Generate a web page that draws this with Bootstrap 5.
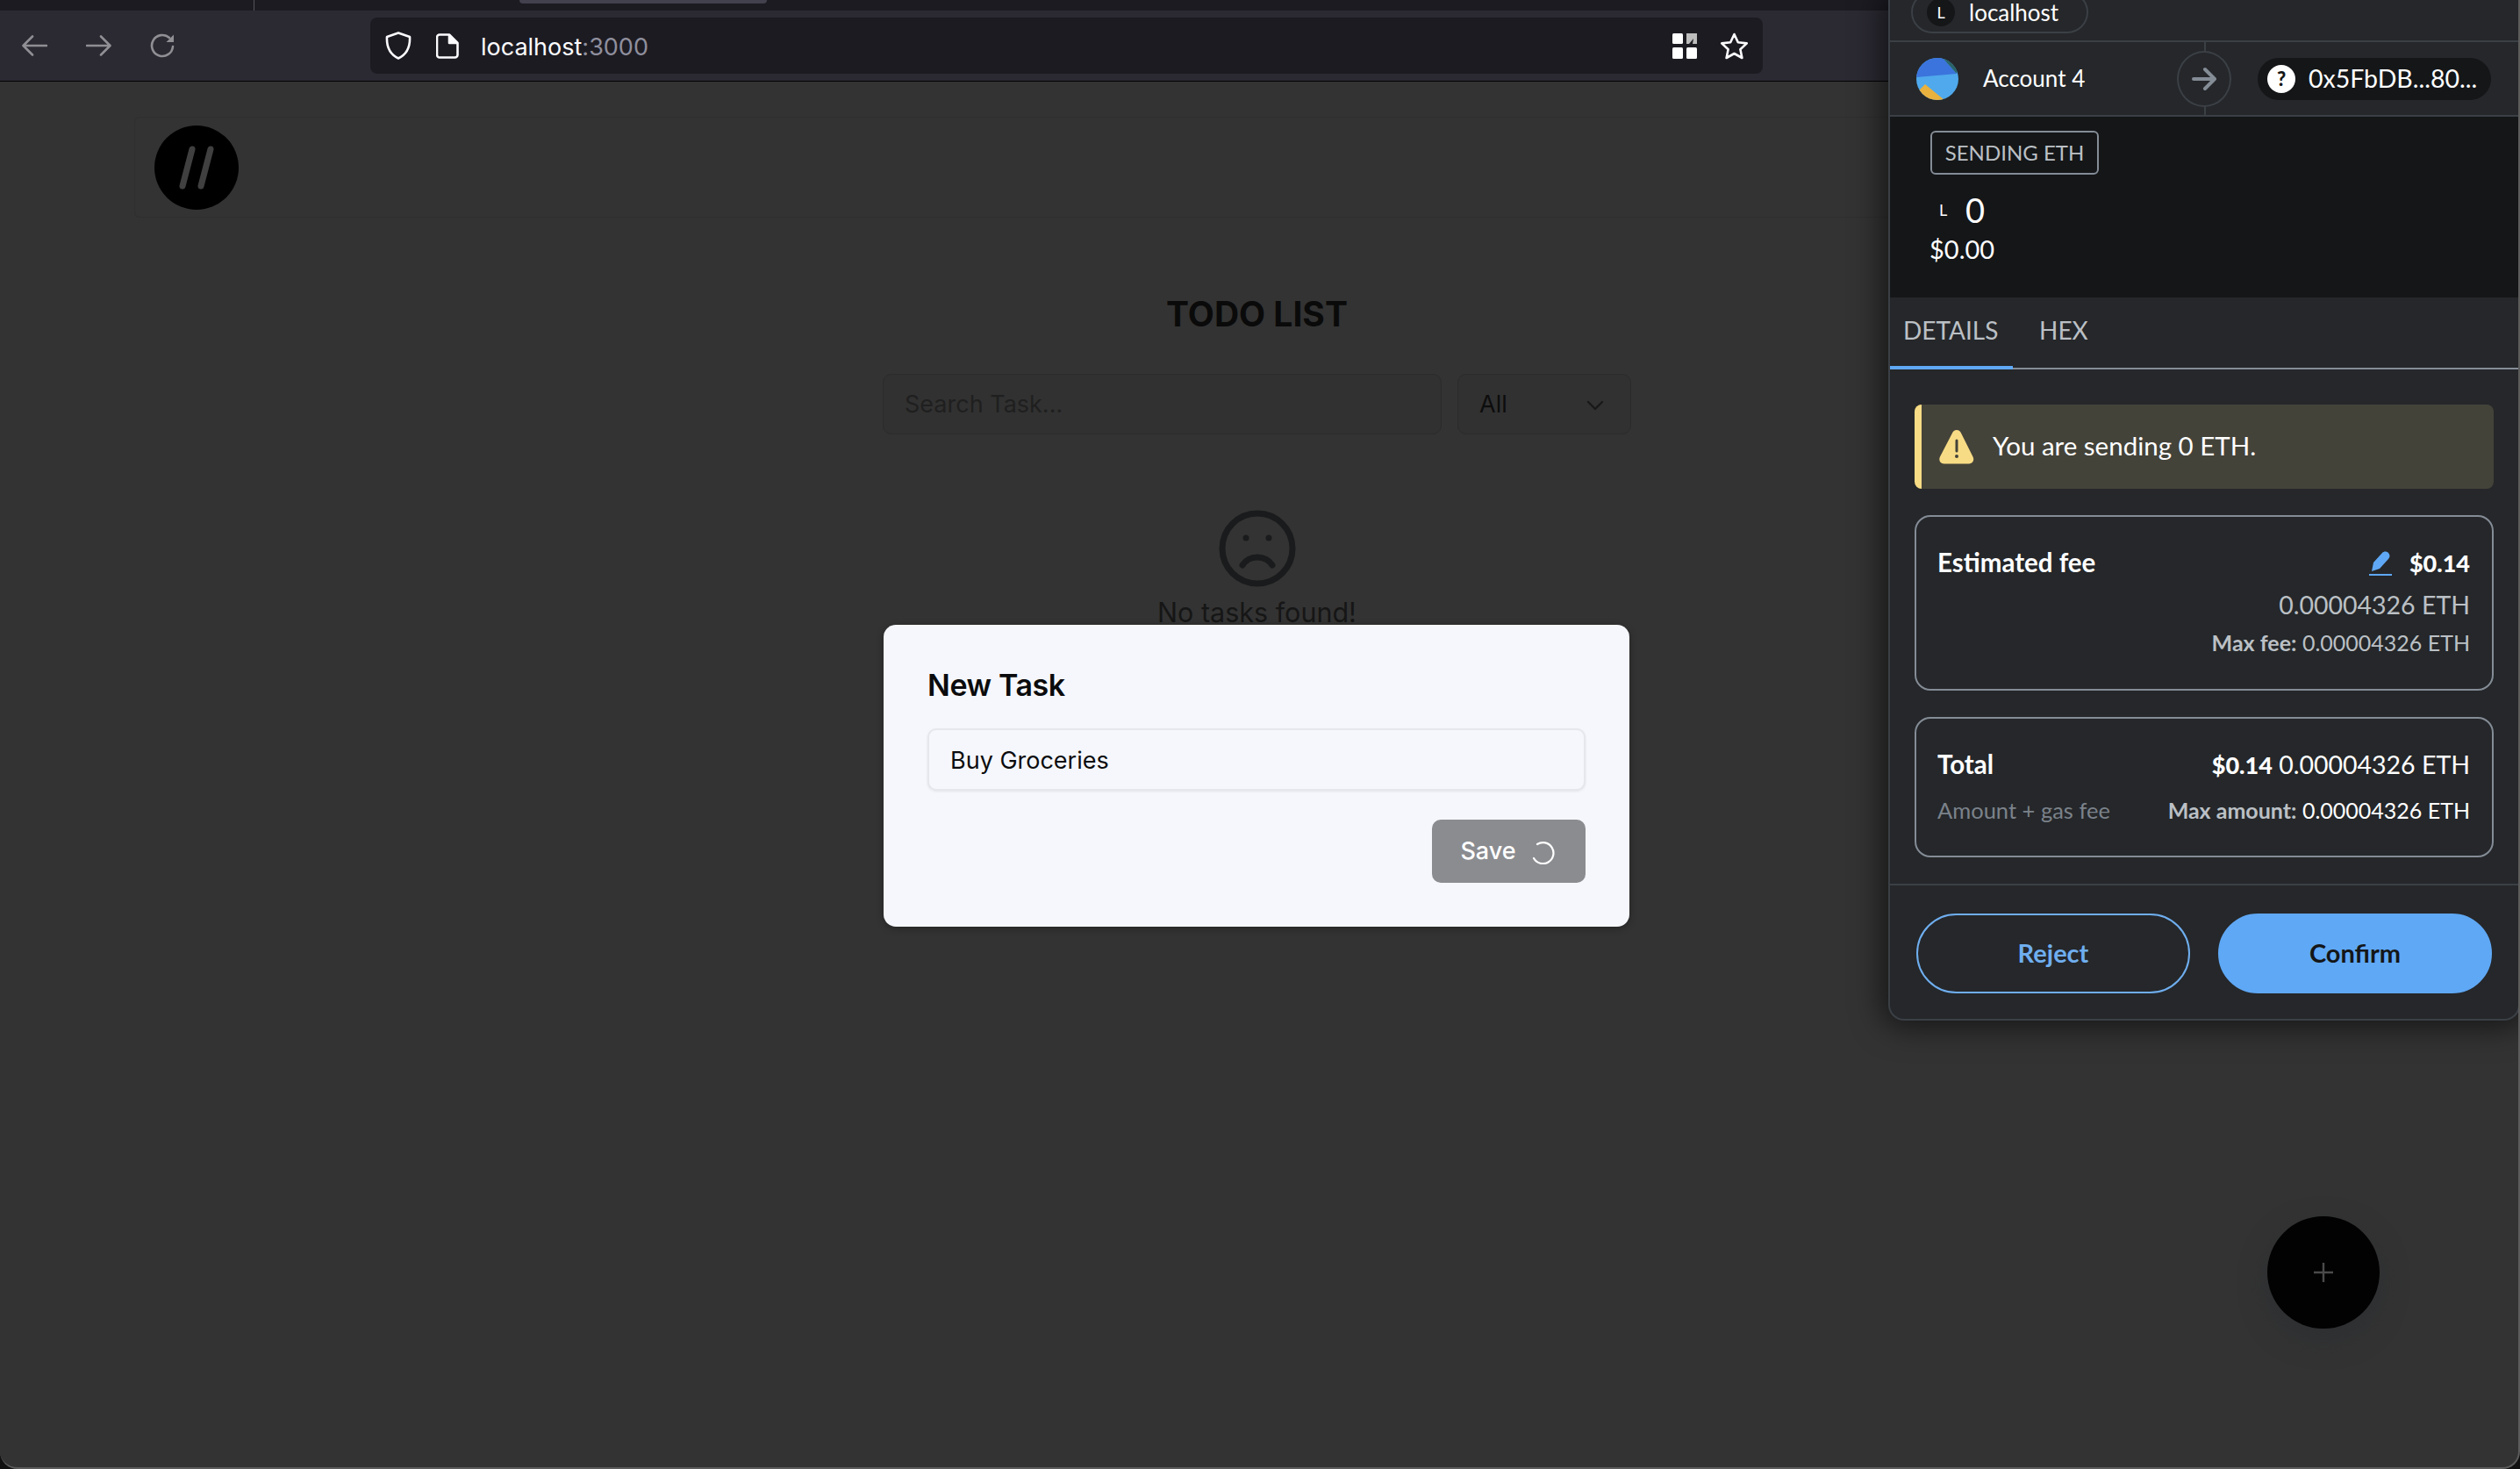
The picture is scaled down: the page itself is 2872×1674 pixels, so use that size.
<!DOCTYPE html>
<html lang="en">
<head>
    <meta charset="UTF-8">
    <title>Todo List</title>
    <link href="https://cdn.jsdelivr.net/npm/bootstrap@5.3.0/dist/css/bootstrap.min.css" rel="stylesheet">
    <style>
        html, body { margin: 0; height: 1674px; overflow: hidden; background: #111; }
        body { font-family: Inter, "Liberation Sans", sans-serif; }
        .win-frame { position: relative; height: 1674px; overflow: hidden; background: #333; border-right: 2px solid #5c5c5c; border-bottom: 2px solid #5c5c5c; border-radius: 0 0 20px 20px; }

        /* firefox chrome */
        .tab-strip { height: 12px; background: #1c1b22; }
        .tab-sep { width: 1px; height: 12px; background: #55545c; margin-left: 289px; }
        .tab-active { width: 282px; height: 4px; margin-left: 302px; background: #42414d; border-radius: 0 0 4px 4px; }
        .tool-bar { height: 81px; background: #2b2a33; border-bottom: 1px solid #000; padding: 8px 0 8px 25px; }
        .nav-ico { margin-right: 44px; flex: none; }
        .url-bar { margin-left: 178px; width: 1587px; height: 64px; background: #1c1b22; border-radius: 8px; padding: 0 16px 0 17px; }
        .url-doc { margin-left: 28px; }
        .url-text { font-size: 27px; color: #fbfbfe; margin: 2px 0 0 25px; line-height: 1; }
        .url-text span { color: #8f8f9d; }
        .url-star { margin-left: 26px; }

        /* app */
        .app-wrap { width: 2558px; margin: 40px 0 0 153px; }
        .app-head { height: 115px; padding: 9px 22px; border-top: 1px solid #2f2f2f; border-bottom: 1px solid #2f2f2f; border-left: 1px solid #2f2f2f; border-radius: 6px; }
        .app-logo { width: 96px; height: 96px; background: #000; border-radius: 50%; }
        .app-title { width: 853px; margin: 86px 0 0 853px; }
        .app-title h1 { font-size: 39px; line-height: 48px; font-weight: 700; color: #0a0a0a; margin: 0 0 44px; text-align: center; }
        .search-box, .filter-box { height: 69px; border: 1px solid #2b2b2b; border-radius: 10px; background: #313131; font-size: 27px; padding: 2px 24px 0; }
        .search-box { width: 637px; color: #1f1f1f; }
        .filter-box { width: 198px; color: #0d0d0d; padding-right: 30px; }
        .empty-box { margin-top: 86px; color: #1a1b1c; text-align: center; }
        .empty-box p { font-size: 30.5px; line-height: 40px; margin: 9px 0 0; color: #161616; }

        .fab-add { position: absolute; left: 2584px; top: 1386px; width: 128px; height: 128px; border-radius: 50%; background: #020202; border: 0; box-shadow: 0 12px 30px rgba(40,44,50,.55); }

        /* dialog */
        .dlg-layer { position: absolute; left: 0; right: 6px; top: 95px; bottom: 0; }
        .dlg-box { width: 850px; height: 344px; padding: 47px 50px 50px; background: #f5f7fc; border-radius: 14px; border: 0; box-shadow: 0 2px 8px rgba(0,0,0,.3); }
        .dlg-box h5 { font-size: 34px; line-height: 44px; font-weight: 600; color: #0b0b0d; margin: 0 0 27px; letter-spacing: -.4px; }
        .dlg-input.form-control { height: 71px; font-size: 27px; padding: 2px 24px 0; background: #f5f7fc; color: #0c0c0e; border: 2px solid #e6e7ec; border-radius: 10px; box-shadow: 0 1px 3px rgba(0,0,0,.08); }
        .dlg-save.btn { height: 72px; width: 175px; margin-top: 33px; font-size: 27px; font-weight: 500; color: #fff; background: #8b8c90; border: 0; border-radius: 10px; padding: 2px 3px 0 0; opacity: 1; }

        /* wallet popup */
        .wallet-pop { position: absolute; right: -2px; top: 0; width: 720px; height: 1163px; background: #25272a; border: 2px solid #3b4046; border-top: 0; border-radius: 0 0 18px 18px; box-shadow: 0 0 34px 8px rgba(0,0,0,.55); font-family: Lato, "Liberation Sans", sans-serif; color: #fff; overflow: hidden; }
        .wal-origin { height: 48px; border-bottom: 2px solid #3b4046; padding-left: 24px; }
        .origin-pill { height: 48px; width: 202px; margin-top: -10px; border: 2px solid #3b4046; border-radius: 24px; padding-left: 16px; font-size: 26px; line-height: 1; }
        .origin-dot { width: 32px; height: 32px; border-radius: 50%; background: #141618; font-size: 18px; margin-right: 16px; }
        .wal-accounts { height: 85px; border-bottom: 2px solid #3b4046; padding-left: 30px; position: relative; }
        .acct-name { font-size: 26px; margin-left: 28px; width: 221px; }
        .acct-arrow { width: 62px; height: 64px; border: 2px solid #3b4046; border-radius: 50%; background: #25272a; position: relative; z-index: 1; }
        .acct-line { position: absolute; left: 358px; top: 0; bottom: 0; width: 2px; background: #3b4046; }
        .addr-pill { width: 266px; height: 48px; margin-left: 30px; background: #141618; border-radius: 24px; padding-left: 11px; font-size: 28.5px; white-space: nowrap; }
        .addr-q { width: 32px; height: 32px; border-radius: 50%; background: #fff; color: #141618; font-size: 22px; font-weight: 900; margin-right: 15px; flex: none; }
        .wal-hero { height: 206px; background: #141618; padding: 16px 0 0 46px; }
        .send-tag { width: 192px; height: 50px; border: 2px solid #848c96; border-radius: 6px; color: #bbc0c5; font-size: 24px; }
        .hero-amt { margin: 20px 0 0 10px; height: 40px; font-size: 38px; }
        .hero-amt small { font-size: 18px; width: 30px; line-height: 1; }
        .hero-usd { font-size: 29px; line-height: 36px; margin: 7px 0 0 -1px; }
        .wal-tabs { height: 82px; border-bottom: 2px solid #848c96; }
        .wal-tab { height: 80px; font-size: 28px; color: #bbc0c5; padding-top: 16px; }
        .wal-tab.on { width: 140px; padding-left: 15px; border-bottom: 4px solid #5fa8f5; height: 82px; }
        .wal-tab.off { margin-left: 30px; }
        .wal-body { padding: 40px 28px 30px 28px; border-bottom: 2px solid #3b4046; }
        .warn-box { height: 96px; background: #44433a; border-left: 8px solid #f8dc85; border-radius: 8px; padding: 0 0 2px 20px; font-size: 29.5px; margin-bottom: 30px; }
        .warn-box svg { margin: 2px 21px 0 0; }
        .fee-box.card { background: transparent; border: 2px solid #848c96; border-radius: 18px; color: #fff; padding: 30px 25px 0 24px; margin-bottom: 30px; }
        .fee-one { height: 200px; }
        .fee-two { height: 160px; margin-bottom: 0 !important; }
        .fee-lbl { font-size: 29.5px; font-weight: 700; }
        .fee-usd { font-size: 27px; font-weight: 900; padding-top: 2px; }
        .fee-pen { margin-right: 20px; }
        .fee-sub { font-size: 28.5px; color: #bbc0c5; text-align: right; }
        .fee-sub b { font-size: 27px; font-weight: 900; }
        .fee-tiny { font-size: 25px; color: #bbc0c5; text-align: right; }
        .txt-w { color: #fff; }
        .fee-grey { font-size: 25.5px; color: #7b828a; }
        .gap-a { margin-top: 5px; }
        .gap-b { margin-top: 3px; }
        .gap-c { margin-top: 11px; }
        .wal-foot { padding: 32px 0 0 30px; gap: 32px; }
        .wal-btn.btn { width: 312px; height: 91px; font-size: 29px; font-weight: 700; border-radius: 46px; padding: 0 0 2px; }
        .btn-rej { background: transparent; border: 2px solid #6faeef; color: #6faeef; }
        .btn-ok { background: #5fa8f5; border: 2px solid #5fa8f5; color: #141618; }
    </style>
</head>
<body>
<div class="win-frame">

    <div class="tab-strip d-flex">
        <div class="tab-sep"></div>
        <div class="tab-active"></div>
    </div>

    <div class="tool-bar d-flex align-items-center">
        <svg class="nav-ico" width="29" height="24" viewBox="0 0 29 24" fill="none" stroke="#8f8f94" stroke-width="2.6" stroke-linecap="round" stroke-linejoin="round"><path d="M28 12H2M12 1.5 1.5 12 12 22.5"/></svg>
        <svg class="nav-ico" width="29" height="24" viewBox="0 0 29 24" fill="none" stroke="#8f8f94" stroke-width="2.6" stroke-linecap="round" stroke-linejoin="round"><path d="M1 12h26M17 1.5 27.5 12 17 22.5"/></svg>
        <svg class="nav-ico" width="29" height="29" viewBox="0 0 29 29" fill="none" stroke="#8f8f94" stroke-width="2.6" stroke-linecap="round" stroke-linejoin="round"><path d="M26 15a12 12 0 1 1-4-10"/><path d="M27 1.5v8.5h-8.5z" fill="#8f8f94" stroke="none"/></svg>
        <div class="url-bar d-flex align-items-center">
            <svg width="30" height="32" viewBox="0 0 30 32" fill="none" stroke="#fbfbfe" stroke-width="2.6" stroke-linejoin="round"><path d="M15 1.5 28 6c.6 11-3.500 20-13 24.500C5.500 26 1.400 17 2 6z"/></svg>
            <svg class="url-doc" width="26" height="29" viewBox="0 0 26 29" fill="none" stroke="#fbfbfe" stroke-width="2.6" stroke-linejoin="round"><path d="M4 1.500h11l9.500 9.500v13.500a3 3 0 0 1-3 3H4a3 3 0 0 1-3-3V4.500a3 3 0 0 1 3-3z"/><path d="M15 1.500V11h9.500" fill="#fbfbfe"/></svg>
            <div class="url-text">localhost<span>:3000</span></div>
            <svg class="ms-auto" width="28" height="29" viewBox="0 0 28 29"><g fill="#fff"><rect width="12" height="12" rx="1.500"/><rect y="16" width="12" height="13" rx="1.500"/><rect x="16" y="16" width="12" height="13" rx="1.500"/></g><path d="M16 0h12v12h-5l1-6-5 6h-3z" fill="#bdbdbd"/></svg>
            <svg class="url-star" width="33" height="31" viewBox="0 0 33 31" fill="none" stroke="#fbfbfe" stroke-width="2.600" stroke-linejoin="round"><path d="M16.500 2l4.300 9.200 10 1.200-7.400 6.800 2 9.800-8.900-5-8.900 5 2-9.800L2.200 12.400l10-1.200z"/></svg>
        </div>
    </div>

    <div class="app-wrap">
        <div class="app-head">
            <div class="app-logo d-flex align-items-center justify-content-center">
                <svg width="46" height="50" viewBox="0 0 46 50" fill="none" stroke="#404040" stroke-width="7" stroke-linecap="round"><path d="M18 4 7 46M39 4 28 46"/></svg>
            </div>
        </div>
        <div class="app-title">
            <h1>TODO LIST</h1>
            <div class="d-flex justify-content-between">
                <div class="search-box d-flex align-items-center">Search Task...</div>
                <div class="filter-box d-flex align-items-center justify-content-between">All
                    <svg width="20" height="12" viewBox="0 0 20 12" fill="none" stroke="#191919" stroke-width="2.400" stroke-linecap="round" stroke-linejoin="round"><path d="M2 2l8 8 8-8"/></svg>
                </div>
            </div>
            <div class="empty-box">
                <svg width="88" height="88" viewBox="0 0 88 88" fill="none" stroke="#1a1b1c" stroke-width="7" stroke-linecap="round"><circle cx="44" cy="44" r="40"/><path d="M27 63c8-12 26-12 34 0"/><circle cx="31" cy="32" r="3.500" fill="#1a1b1c" stroke="none"/><circle cx="57" cy="32" r="3.500" fill="#1a1b1c" stroke="none"/></svg>
                <p>No tasks found!</p>
            </div>
        </div>
    </div>

    <button class="fab-add d-flex align-items-center justify-content-center" type="button" aria-label="Add">
        <svg width="22" height="22" viewBox="0 0 22 22" stroke="#4a4a4a" stroke-width="2.400"><path d="M0 11h22M11 0v22"/></svg>
    </button>

    <div class="dlg-layer d-flex align-items-center justify-content-center">
        <div class="dlg-box">
            <h5>New Task</h5>
            <input class="form-control dlg-input" type="text" value="Buy Groceries">
            <div class="d-flex justify-content-end">
                <button class="btn dlg-save d-flex align-items-center justify-content-center" type="button" disabled>Save
                    <svg class="ms-3" width="28" height="28" viewBox="0 0 28 28" fill="none" stroke="#fff" stroke-width="2.200" stroke-linecap="round"><path d="M8 5a12 12 0 1 1-4 16"/></svg>
                </button>
            </div>
        </div>
    </div>

    <div class="wallet-pop">
        <div class="wal-origin d-flex align-items-start">
            <div class="origin-pill d-flex align-items-center">
                <div class="origin-dot d-flex align-items-center justify-content-center">L</div>localhost
            </div>
        </div>
        <div class="wal-accounts d-flex align-items-center">
            <div class="acct-line"></div>
            <svg width="48" height="48" viewBox="0 0 48 48"><defs><clipPath id="av"><circle cx="24" cy="24" r="24"/></clipPath></defs><g clip-path="url(#av)"><rect width="48" height="48" fill="#4fa9ec"/><path d="M0 22 46 18 30 0H0z" fill="#3b74dc"/><path d="M30 0 46 18 48 0z" fill="#2a6468"/><path d="M0 40 10 30 32 48H0z" fill="#e9b13e"/></g></svg>
            <div class="acct-name">Account 4</div>
            <div class="acct-arrow d-flex align-items-center justify-content-center">
                <svg width="28" height="28" viewBox="0 0 28 28" fill="none" stroke="#848c96" stroke-width="4" stroke-linecap="round" stroke-linejoin="round"><path d="M2 14h24M15 3l11 11-11 11"/></svg>
            </div>
            <div class="addr-pill d-flex align-items-center">
                <div class="addr-q d-flex align-items-center justify-content-center">?</div>0x5FbDB...80...
            </div>
        </div>
        <div class="wal-hero">
            <div class="send-tag d-flex align-items-center justify-content-center">SENDING ETH</div>
            <div class="hero-amt d-flex align-items-center"><small>L</small>0</div>
            <div class="hero-usd">$0.00</div>
        </div>
        <div class="wal-tabs d-flex">
            <div class="wal-tab on">DETAILS</div>
            <div class="wal-tab off">HEX</div>
        </div>
        <div class="wal-body">
            <div class="warn-box d-flex align-items-center">
                <svg width="40" height="40" viewBox="0 0 40 40"><path d="M20 1c2.500 0 4 1.500 5 3.500l13.500 27c2 4-.5 8-4.500 8H5.500c-4 0-6.500-4-4.500-8L15 4.500C16 2.500 17.500 1 20 1z" fill="#f8dc85"/><path d="M20 13v12" stroke="#44433a" stroke-width="3" stroke-linecap="round"/><circle cx="20" cy="31" r="2" fill="#44433a"/></svg>
                You are sending 0 ETH.
            </div>
            <div class="card fee-box fee-one">
                <div class="d-flex justify-content-between align-items-center">
                    <div class="fee-lbl">Estimated fee</div>
                    <div class="fee-usd d-flex align-items-center">
                        <svg class="fee-pen" width="26" height="28" viewBox="0 0 26 28"><path d="M5 13 15 2c2-2 5-2 7 0s2 5 0 7L12 20l-9 3z" fill="#5fa8f5"/><path d="M0 27h26" stroke="#5fa8f5" stroke-width="2"/></svg>
                        $0.14
                    </div>
                </div>
                <div class="fee-sub gap-a">0.00004326 ETH</div>
                <div class="fee-tiny gap-b"><b>Max fee:</b> 0.00004326 ETH</div>
            </div>
            <div class="card fee-box fee-two">
                <div class="d-flex justify-content-between align-items-center">
                    <div class="fee-lbl">Total</div>
                    <div class="fee-sub txt-w"><b>$0.14</b> 0.00004326 ETH</div>
                </div>
                <div class="d-flex justify-content-between align-items-center gap-c">
                    <div class="fee-grey">Amount + gas fee</div>
                    <div class="fee-tiny txt-w"><b class="fee-tiny">Max amount:</b> 0.00004326 ETH</div>
                </div>
            </div>
        </div>
        <div class="wal-foot d-flex">
            <button class="btn wal-btn btn-rej" type="button">Reject</button>
            <button class="btn wal-btn btn-ok" type="button">Confirm</button>
        </div>
    </div>

</div>
</body>
</html>
